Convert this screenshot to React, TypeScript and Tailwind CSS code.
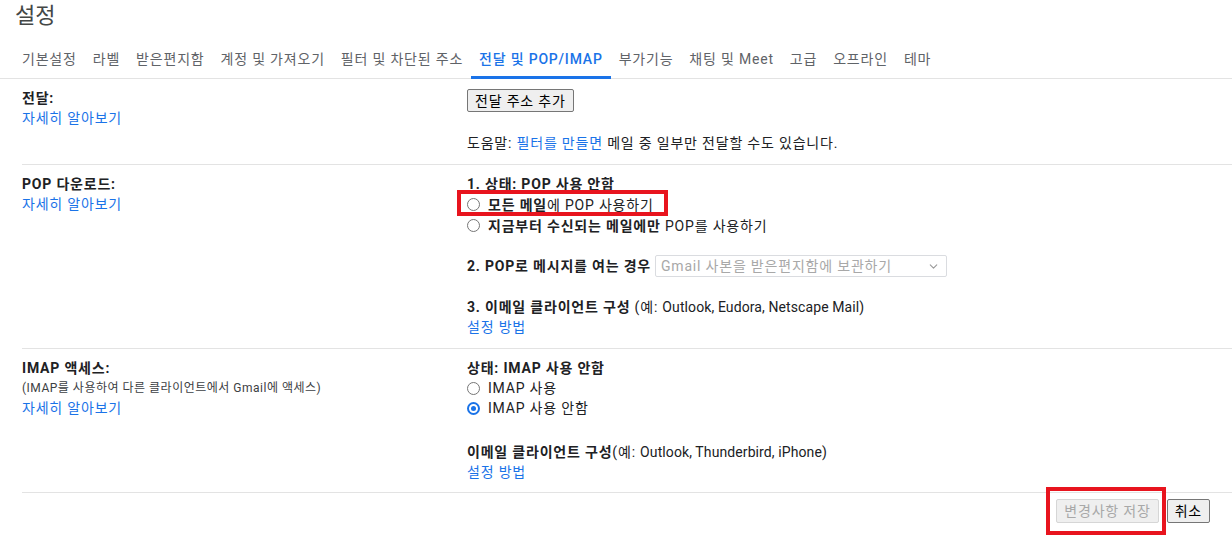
import { ChevronDown } from 'lucide-react'

const tabs = [
  '기본설정',
  '라벨',
  '받은편지함',
  '계정 및 가져오기',
  '필터 및 차단된 주소',
  '전달 및 POP/IMAP',
  '부가기능',
  '채팅 및 Meet',
  '고급',
  '오프라인',
  '테마',
]

function Radio({ checked }: { checked?: boolean }) {
  if (checked) {
    return (
      <span className="w-[13px] h-[13px] rounded-full border-2 border-[#1a73e8] bg-white flex items-center justify-center shrink-0">
        <span className="w-[5px] h-[5px] rounded-full bg-[#1a73e8]" />
      </span>
    )
  }
  return <span className="w-[13px] h-[13px] rounded-full border border-[#767676] bg-white shrink-0" />
}

function Link({ children }: { children: React.ReactNode }) {
  return <span className="text-[#1a73e8] cursor-pointer">{children}</span>
}

export default function App() {
  return (
    <div className="min-h-screen bg-white text-[#202124] text-[14px] leading-[20px] tracking-[0.8px] font-[Roboto,'Noto_Sans_CJK_KR',sans-serif]">
      {/* Title */}
      <div className="h-[39px] pl-[15px] pt-[1px]">
        <h1 className="text-[22px] leading-[30px] tracking-normal text-[#444746]">설정</h1>
      </div>

      {/* Tabs */}
      <div className="flex pl-[14px] border-b border-[#e3e3e3]">
        {tabs.map(t => {
          const active = t === '전달 및 POP/IMAP'
          return (
            <div
              key={t}
              className={`h-[40px] pt-[2px] px-2 flex items-center border-b-[3px] -mb-px ${
                active ? 'border-[#1a73e8] text-[#1a73e8] font-medium' : 'border-transparent text-[#5f6368]'
              }`}
            >
              {t}
            </div>
          )
        })}
      </div>

      <div className="ml-[22px]">
        {/* Forwarding */}
        <div className="grid grid-cols-[445px_1fr] pt-[9px] pb-[11px] border-b border-[#e3e3e3]">
          <div>
            <div className="font-bold">전달:</div>
            <Link>자세히 알아보기</Link>
          </div>
          <div>
            <button className="mt-[1px] h-[23px] px-[7px] bg-[#efefef] border border-[#767676] rounded-[2px] text-[14px] leading-[20px] text-black">
              전달 주소 추가
            </button>
            <div className="mt-[21px]">
              도움말: <Link>필터를 만들면</Link> 메일 중 일부만 전달할 수도 있습니다.
            </div>
          </div>
        </div>

        {/* POP */}
        <div className="grid grid-cols-[445px_1fr] pt-[9px] pb-[11px] border-b border-[#e3e3e3]">
          <div>
            <div className="font-bold">POP 다운로드:</div>
            <Link>자세히 알아보기</Link>
          </div>
          <div>
            <div className="font-bold">1. 상태: POP 사용 안함</div>
            <div className="relative flex items-center gap-2 h-[21px]">
              <Radio />
              <span>
                <b>모든 메일</b>에 POP 사용하기
              </span>
              <div className="absolute left-[-10px] top-[-4px] w-[211px] h-[26px] border-4 border-[#e8141e] pointer-events-none" />
            </div>
            <div className="flex items-center gap-2 h-[21px]">
              <Radio />
              <span>
                <b>지금부터 수신되는 메일에만</b> POP를 사용하기
              </span>
            </div>
            <div className="mt-[19px] flex items-center">
              <span className="font-bold">2. POP로 메시지를 여는 경우</span>
              <div className="ml-1 w-[292px] h-[22px] border border-[#dadce0] rounded-[2px] flex items-center justify-between pl-[5px] pr-[6px] text-[#a8a8a8]">
                <span>Gmail 사본을 받은편지함에 보관하기</span>
                <ChevronDown size={13} strokeWidth={2} className="text-[#9a9a9a]" />
              </div>
            </div>
            <div className="mt-[20px]">
              <b>3. 이메일 클라이언트 구성</b> (예: <span className="tracking-[0.1px]">Outlook, Eudora, Netscape Mail</span>)
            </div>
            <Link>설정 방법</Link>
          </div>
        </div>

        {/* IMAP */}
        <div className="grid grid-cols-[445px_1fr] pt-[9px] pb-[10px] border-b border-[#e3e3e3]">
          <div>
            <div className="font-bold">IMAP 액세스:</div>
            <div className="text-[12px] tracking-[0.5px] text-[#3c4043]">(IMAP를 사용하여 다른 클라이언트에서 Gmail에 액세스)</div>
            <Link>자세히 알아보기</Link>
          </div>
          <div>
            <div className="font-bold">상태: IMAP 사용 안함</div>
            <div className="flex items-center gap-2 h-[20px]">
              <Radio />
              <span>IMAP 사용</span>
            </div>
            <div className="flex items-center gap-2 h-[20px]">
              <Radio checked />
              <span>IMAP 사용 안함</span>
            </div>
            <div className="mt-[24px]">
              <b>이메일 클라이언트 구성</b>(예: <span className="tracking-[0.1px]">Outlook, Thunderbird, iPhone</span>)
            </div>
            <Link>설정 방법</Link>
          </div>
        </div>

        {/* Actions */}
        <div className="flex justify-end gap-[8px] pt-[6px] pr-[22px]">
          <div className="relative">
            <button
              disabled
              className="h-[24px] px-[7px] bg-[#efefef] border border-[#d6d6d6] rounded-[2px] text-[14px] leading-[20px] text-[#a8a8a8]"
            >
              변경사항 저장
            </button>
            <div className="absolute left-[-10px] right-[-7px] top-[-12px] bottom-[-12px] border-4 border-[#e8141e] pointer-events-none" />
          </div>
          <button className="h-[24px] px-[7px] bg-[#efefef] border border-[#767676] rounded-[2px] text-[14px] leading-[20px] text-black">
            취소
          </button>
        </div>
      </div>
    </div>
  )
}
